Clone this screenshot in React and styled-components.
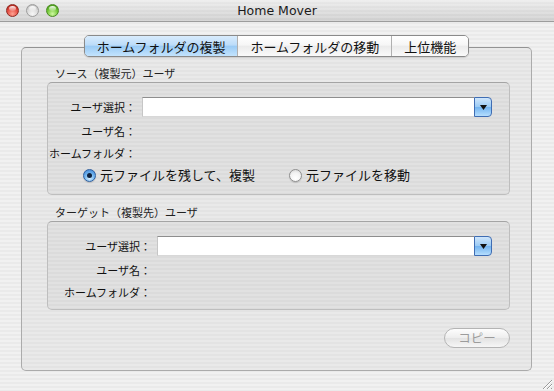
import React from 'react';
import styled, { createGlobalStyle } from 'styled-components';

const jp = `"Noto Sans CJK JP", "DejaVu Sans", sans-serif`;

const pinstripe = (a, b) =>
    `repeating-linear-gradient(to bottom, ${a} 0px, ${a} 2px, ${b} 2px, ${b} 4px)`;

const GlobalStyle = createGlobalStyle`
    html, body {
        margin: 0;
        padding: 0;
        background: #ececec;
    }
`;

const Window = styled.div`
    position: relative;
    width: 554px;
    height: 391px;
    display: flex;
    flex-direction: column;
    overflow: hidden;
    background: ${pinstripe('#f1f1f1', '#eaeaea')};
    font-family: ${jp};
    color: #111;
`;

const TitleBar = styled.div`
    flex: none;
    height: 21px;
    display: grid;
    grid-template-columns: 1fr auto 1fr;
    align-items: center;
    border-bottom: 1px solid #9c9c9c;
    background: linear-gradient(to bottom, rgba(255,255,255,0.35), rgba(0,0,0,0.07)),
        ${pinstripe('#e6e6e6', '#dedede')};
`;

const Lights = styled.div`
    display: flex;
    gap: 7px;
    padding-left: 6px;
`;

const lightColors = {
    red: { base: '#e2473d', dark: '#9e1a12', glow: '#ffa493', edge: '#8e2a22' },
    gray: { base: '#d9d9d9', dark: '#b2b2b2', glow: '#f7f7f7', edge: '#9d9d9d' },
    green: { base: '#6ec533', dark: '#3a8710', glow: '#d0f9a2', edge: '#4a8a22' },
};

const Light = styled.span`
    position: relative;
    width: 13px;
    height: 13px;
    box-sizing: border-box;
    border-radius: 50%;
    border: 1px solid ${p => lightColors[p.color].edge};
    background: radial-gradient(circle at 50% 80%,
        ${p => lightColors[p.color].glow} 0%,
        ${p => lightColors[p.color].base} 55%,
        ${p => lightColors[p.color].dark} 100%);

    &::after {
        content: '';
        position: absolute;
        left: 2px;
        right: 2px;
        top: 1px;
        height: 5px;
        border-radius: 50%;
        background: linear-gradient(to bottom, rgba(255,255,255,0.95), rgba(255,255,255,0.15));
    }
`;

const Title = styled.div`
    font-family: "DejaVu Sans", "Liberation Sans", sans-serif;
    font-size: 12.5px;
    color: #1a1a1a;
`;

const Body = styled.div`
    flex: 1;
    display: flex;
    flex-direction: column;
    padding: 13px 22px 20px 21px;
`;

const TabBar = styled.div`
    position: relative;
    z-index: 1;
    align-self: center;
    display: flex;
    height: 22px;
    box-sizing: border-box;
    margin-bottom: -10px;
    border: 1px solid #8a8a8a;
    border-radius: 5px;
    overflow: hidden;
    box-shadow: 0 1px 1px rgba(0,0,0,0.12);
`;

const Tab = styled.div`
    display: flex;
    align-items: center;
    padding: 0 12px;
    font-size: 13px;
    line-height: 1;
    color: #111;
    border-left: 1px solid #b0b0b0;
    background: ${p => p.active
        ? 'linear-gradient(to bottom, #d9ecfd 0%, #bcdcf9 45%, #9bcbf5 52%, #c3e3fd 100%)'
        : 'linear-gradient(to bottom, #ffffff 0%, #f6f6f6 45%, #ebebeb 52%, #fafafa 100%)'};

    &:first-child {
        border-left: none;
    }
`;

const Panel = styled.div`
    flex: 1;
    display: flex;
    flex-direction: column;
    border: 1px solid #ababab;
    border-top-color: #939393;
    border-radius: 5px;
    background: ${pinstripe('#e9e9e9', '#e3e3e3')};
    padding: 18px 21px 0 25px;
`;

const GroupLabel = styled.div`
    font-size: 11px;
    line-height: 14px;
    color: #222;
    padding-left: 8px;
    margin: ${p => p.first ? 0 : 10}px 0 2px;
`;

const GroupBox = styled.div`
    display: grid;
    grid-template-columns: ${p => p.labelWidth}px 1fr;
    column-gap: 6px;
    row-gap: 6px;
    align-items: center;
    padding: 14px 17px ${p => p.bottom}px 0;
    border: 1px solid #bebebe;
    border-top-color: #a4a4a4;
    border-radius: 5px;
    background: ${pinstripe('#e1e1e1', '#dbdbdb')};
`;

const FieldLabel = styled.div`
    font-size: 11px;
    line-height: 16px;
    text-align: right;
    white-space: nowrap;
    color: #111;
`;

const Popup = styled.div`
    display: flex;
    height: 20px;
`;

const PopupField = styled.div`
    flex: 1;
    background: #fff;
    border-top: 1px solid #8e8e8e;
    border-left: 1px solid #c6c6c6;
    border-bottom: 1px solid #d8d8d8;
`;

const PopupButton = styled.div`
    width: 18px;
    box-sizing: border-box;
    display: flex;
    align-items: center;
    justify-content: center;
    border: 1px solid #3f6db3;
    border-radius: 0 4px 4px 0;
    background: linear-gradient(to bottom, #cfe6fc 0%, #9ccbf4 48%, #74b4f0 52%, #b5defe 100%);
`;

const RadioRow = styled.div`
    grid-column: 1 / -1;
    display: flex;
    gap: 34px;
    padding-left: 35px;
`;

const RadioOption = styled.label`
    display: flex;
    align-items: center;
    gap: 4px;
    font-size: 13px;
    line-height: 16px;
    white-space: nowrap;
`;

const RadioDot = styled.span`
    width: 13px;
    height: 13px;
    box-sizing: border-box;
    border-radius: 50%;
    display: flex;
    align-items: center;
    justify-content: center;
    border: 1px solid ${p => p.checked ? '#2f5f9f' : '#8f8f8f'};
    background: ${p => p.checked
        ? 'radial-gradient(circle at 50% 75%, #d6f0ff 0%, #6fb3ef 50%, #3a7fd0 100%)'
        : 'radial-gradient(circle at 50% 75%, #ffffff 0%, #f2f2f2 55%, #cfcfcf 100%)'};
    box-shadow: 0 1px 1px rgba(0,0,0,0.15);

    &::after {
        content: '';
        display: ${p => p.checked ? 'block' : 'none'};
        width: 5px;
        height: 5px;
        border-radius: 50%;
        background: #10233f;
    }
`;

const ButtonRow = styled.div`
    display: flex;
    justify-content: flex-end;
    margin-top: 18px;
`;

const Button = styled.button`
    width: 66px;
    height: 20px;
    padding: 0;
    border: 1px solid #b4b4b4;
    border-radius: 10px;
    font-family: ${jp};
    font-size: 12.5px;
    line-height: 1;
    color: #9c9c9c;
    background: linear-gradient(to bottom, #fdfdfd 0%, #eeeeee 48%, #e3e3e3 52%, #f6f6f6 100%);
`;

const Grip = styled.svg`
    position: absolute;
    right: 1px;
    bottom: 1px;
`;

function PopupMenu () {
    return (
        <Popup>
            <PopupField />
            <PopupButton>
                <svg width='7' height='5' viewBox='0 0 7 5'>
                    <path d='M0 0 H7 L3.5 5 Z' fill='#111' />
                </svg>
            </PopupButton>
        </Popup>
    );
}

function UserFields ({ labelWidth, bottom, children }) {
    return (
        <GroupBox labelWidth={labelWidth} bottom={bottom}>
            <FieldLabel>ユーザ選択：</FieldLabel>
            <PopupMenu />
            <FieldLabel>ユーザ名：</FieldLabel>
            <div />
            <FieldLabel>ホームフォルダ：</FieldLabel>
            <div />
            {children}
        </GroupBox>
    );
}

export default function App () {
    return (
        <Window>
            <GlobalStyle />
            <TitleBar>
                <Lights>
                    <Light color='red' />
                    <Light color='gray' />
                    <Light color='green' />
                </Lights>
                <Title>Home Mover</Title>
                <div />
            </TitleBar>

            <Body>
                <TabBar>
                    <Tab active>ホームフォルダの複製</Tab>
                    <Tab>ホームフォルダの移動</Tab>
                    <Tab>上位機能</Tab>
                </TabBar>

                <Panel>
                    <GroupLabel first>ソース（複製元）ユーザ</GroupLabel>
                    <UserFields labelWidth={88} bottom={11}>
                        <RadioRow>
                            <RadioOption>
                                <RadioDot checked />
                                元ファイルを残して、複製
                            </RadioOption>
                            <RadioOption>
                                <RadioDot />
                                元ファイルを移動
                            </RadioOption>
                        </RadioRow>
                    </UserFields>

                    <GroupLabel>ターゲット（複製先）ユーザ</GroupLabel>
                    <UserFields labelWidth={103} bottom={9} />

                    <ButtonRow>
                        <Button disabled>コピー</Button>
                    </ButtonRow>
                </Panel>
            </Body>

            <Grip width='13' height='13' viewBox='0 0 13 13'>
                <path d='M12 3 L3 12 M12 7 L7 12 M12 11 L11 12' stroke='#9a9a9a' strokeWidth='1' />
                <path d='M12 4 L4 12 M12 8 L8 12' stroke='#ffffff' strokeWidth='1' />
            </Grip>
        </Window>
    );
}
